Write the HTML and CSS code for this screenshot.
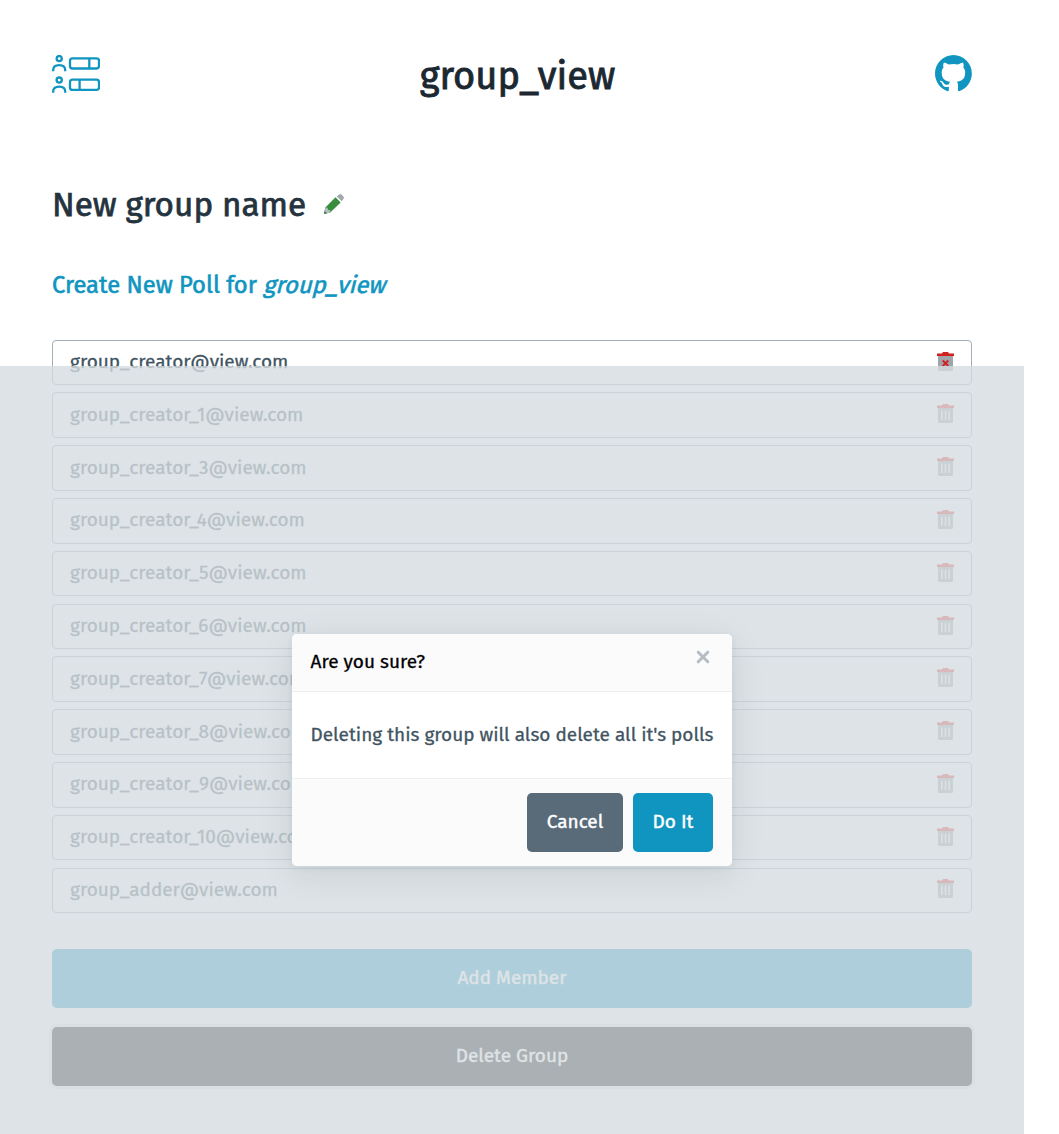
FILE: index.html
```html
<!DOCTYPE html>
<html lang="en">
<head>
<meta charset="utf-8">
<title>group_view</title>
<link rel="stylesheet" href="styles.css">
</head>
<body>
<svg class="sprite" width="0" height="0" aria-hidden="true">
  <symbol id="trash" viewBox="0 0 17 19">
    <path fill="#a0a5a9" d="M1 4h15v13.500a1.500 1.500 0 0 1-1.500 1.500h-12A1.500 1.500 0 0 1 1 17.500z"/>
    <path fill="#f0f2f4" d="M4 6.500h1.600v9.500H4zM7.700 6.500h1.600v9.500H7.700zM11.400 6.500h1.600v9.500h-1.600z"/>
    <path fill="#e02a2a" d="M0 1.500h5L6 0h5l1 1.500h5V4H0z"/>
  </symbol>
  <symbol id="trash-x" viewBox="0 0 17 19">
    <path fill="#a0a5a9" d="M1 4h15v13.500a1.500 1.500 0 0 1-1.500 1.500h-12A1.500 1.500 0 0 1 1 17.500z"/>
    <path stroke="#d12020" stroke-width="1.800" d="M5.700 8.500l5.600 5.500M11.300 8.500l-5.600 5.500"/>
    <path fill="#d12020" d="M0 1.500h5L6 0h5l1 1.500h5V4H0z"/>
  </symbol>
</svg>
<div class="page">
  <header class="topbar">
    <svg class="logo" width="48" height="40" viewBox="0 0 48 40" fill="none" stroke="#1095c1" stroke-width="2.300">
      <g id="person"><circle cx="7.200" cy="3.600" r="2.600"/><path d="M1.200 16.300v-1.200C1.200 12 3.500 10.200 7.200 10.200s6 1.800 6 4.900v1.200"/></g>
      <use href="#person" y="21.500"/>
      <rect x="18" y="3.300" width="29" height="10.200" rx="2.500"/><path d="M37.300 3.300v10.200"/>
      <rect x="18" y="24.700" width="29" height="10.200" rx="2.500"/><path d="M27.600 24.700v10.200"/>
    </svg>
    <h1 class="title">group_view</h1>
    <svg class="github" width="37" height="37" viewBox="0 0 98 98" fill="#1095c1"><path fill-rule="evenodd" d="M48.854 0C21.839 0 0 22 0 49.217c0 21.756 13.993 40.172 33.405 46.690 2.427.49 3.316-1.059 3.316-2.362 0-1.141-.08-5.052-.08-9.127-13.590 2.934-16.420-5.867-16.420-5.867-2.184-5.704-5.420-7.170-5.420-7.170-4.448-3.015.324-3.015.324-3.015 4.934.326 7.523 5.052 7.523 5.052 4.367 7.496 11.404 5.378 14.235 4.074.404-3.178 1.699-5.378 3.074-6.600-10.839-1.141-22.243-5.378-22.243-24.283 0-5.378 1.940-9.778 5.014-13.200-.485-1.222-2.184-6.275.486-13.038 0 0 4.125-1.304 13.426 5.052a46.970 46.970 0 0 1 12.214-1.630c4.125 0 8.330.571 12.213 1.630 9.302-6.356 13.427-5.052 13.427-5.052 2.670 6.763.97 11.816.485 13.038 3.155 3.422 5.015 7.822 5.015 13.200 0 18.905-11.404 23.060-22.324 24.283 1.780 1.548 3.316 4.481 3.316 9.126 0 6.600-.08 11.897-.08 13.526 0 1.304.89 2.853 3.316 2.364 19.412-6.520 33.405-24.935 33.405-46.691C97.707 22 75.788 0 48.854 0z"/></svg>
  </header>
  <div class="group-name">
    <h2 class="name">New group name</h2>
    <svg class="pencil" width="20" height="20" viewBox="0 0 20 20"><path fill="#388e3c" d="M11.500 3.200L16.700 8.400 6.200 18.500 0 20l1.300-6.500z"/><path fill="#a3a8ac" d="M12.800 2.500L15.200.6q1.200-1 2.300 0l1.900 1.900q1.100 1.100 0 2.400L17.700 7.300z"/><path fill="#b5bcc1" d="M1.600 13.200l1.900.6.700 2.100 2 .4.300 2L0 20z"/><path fill="#2e7d32" d="M.7 17.100L0 20l2.900-.7z"/></svg>
  </div>
  <h3 class="new-poll"><a>Create New Poll for <span class="slanted">group_view</span></a></h3>
  <ul class="members">
    <li class="member"><span>group_creator@view.com</span><svg class="bin"><use href="#trash-x"/></svg></li>
    <li class="member"><span>group_creator_1@view.com</span><svg class="bin"><use href="#trash"/></svg></li>
    <li class="member"><span>group_creator_3@view.com</span><svg class="bin"><use href="#trash"/></svg></li>
    <li class="member"><span>group_creator_4@view.com</span><svg class="bin"><use href="#trash"/></svg></li>
    <li class="member"><span>group_creator_5@view.com</span><svg class="bin"><use href="#trash"/></svg></li>
    <li class="member"><span>group_creator_6@view.com</span><svg class="bin"><use href="#trash"/></svg></li>
    <li class="member"><span>group_creator_7@view.com</span><svg class="bin"><use href="#trash"/></svg></li>
    <li class="member"><span>group_creator_8@view.com</span><svg class="bin"><use href="#trash"/></svg></li>
    <li class="member"><span>group_creator_9@view.com</span><svg class="bin"><use href="#trash"/></svg></li>
    <li class="member"><span>group_creator_10@view.com</span><svg class="bin"><use href="#trash"/></svg></li>
    <li class="member"><span>group_adder@view.com</span><svg class="bin"><use href="#trash"/></svg></li>
  </ul>
  <div class="actions">
    <button class="btn primary">Add Member</button>
    <button class="btn danger">Delete Group</button>
  </div>
  <div class="overlay">
    <div class="dialog">
      <div class="dialog-head"><span class="question">Are you sure?</span>
        <svg class="close" width="14" height="14" viewBox="0 0 14 14"><path d="M2.200 2.200l9.600 9.600M11.800 2.200l-9.600 9.600" stroke="#b5bdc3" stroke-width="3" stroke-linecap="round"/></svg>
      </div>
      <div class="dialog-body"><span class="message">Deleting this group will also delete all it's polls</span></div>
      <div class="dialog-foot">
        <button class="btn secondary">Cancel</button>
        <button class="btn primary confirm">Do It</button>
      </div>
    </div>
  </div>
</div>
</body>
</html>
```
FILE: styles.css
```css
* { box-sizing: border-box; }
body {
  margin: 0;
  background: #fff;
  color: #415462;
  font: 400 19px/28px "Fira Sans", "Open Sans", sans-serif;
  -webkit-text-stroke: 0.3px;
}
.sprite { position: absolute; }
h1, h2, h3, ul { margin: 0; padding: 0; }
.page {
  position: relative;
  width: 1024px;
  height: 1134px;
  padding: 0 52px;
  overflow: hidden;
}
.topbar {
  display: flex;
  justify-content: space-between;
  height: 152px;
  padding-top: 55px;
}
.title {
  margin-top: -4px;
  font-size: 38px;
  font-weight: 400;
  line-height: 50px;
  color: #1b2832;
  white-space: nowrap;
  -webkit-text-stroke: 0.9px;
}
.group-name {
  display: flex;
  align-items: center;
  gap: 18px;
  height: 106px;
  color: #24333e;
}
.name {
  font-size: 33.250px;
  font-weight: 400;
  line-height: 44px;
  -webkit-text-stroke: 0.75px;
}
.pencil { margin-top: -2px; }
.new-poll {
  height: 81.700px;
  padding-top: 10px;
  font-size: 23.750px;
  font-weight: 400;
  line-height: 34px;
  color: #1095c1;
  white-space: nowrap;
  -webkit-text-stroke: 0.6px;
}
.slanted {
  display: inline-block;
  margin-left: 2px;
  transform: skewX(-14deg);
}
.members {
  display: flex;
  flex-direction: column;
  gap: 7.200px;
  list-style: none;
}
.member {
  display: flex;
  justify-content: space-between;
  height: 45.600px;
  padding: 7.400px 17px 7px;
  border: 1px solid #a2afb9;
  border-radius: 4px;
}
.bin { width: 17px; height: 19px; margin-top: 3.600px; }
.actions {
  display: flex;
  flex-direction: column;
  gap: 19px;
  margin-top: 36.300px;
}
.btn {
  height: 59px;
  padding: 0 19px 2px;
  border: 0;
  border-radius: 5px;
  color: #fff;
  font: inherit;
  white-space: nowrap;
  -webkit-text-stroke: 0.4px;
}
.primary { background: #1095c1; }
.secondary { background: #596b78; }
.danger { background: #000; box-shadow: 0 0 0 3px rgba(89, 107, 120, 0.125); }
.overlay {
  position: absolute;
  inset: 366px 0 0;
  display: flex;
  align-items: center;
  justify-content: center;
  background: rgba(213, 220, 224, 0.8);
}
.dialog {
  width: 440px;
  border-radius: 5px;
  overflow: hidden;
  background: #fff;
  box-shadow: 0 2px 8px rgba(27, 40, 50, 0.05), 0 8px 36px rgba(27, 40, 50, 0.09);
}
.dialog-head, .dialog-foot { display: flex; background: #fbfbfc; }
.dialog-head {
  justify-content: space-between;
  height: 58px;
  padding: 14px 22px 0 18.500px;
  border-bottom: 1px solid #edf0f3;
  color: #000;
}
.close { margin-top: 2.400px; }
.dialog-body { height: 86px; padding: 29px 18.500px; white-space: nowrap; }
.dialog-foot {
  justify-content: flex-end;
  gap: 10px;
  height: 88px;
  padding: 14px 19px;
  border-top: 1px solid #edf0f3;
}
.dialog-foot .secondary { width: 96px; }
.confirm { width: 80px; }
```
